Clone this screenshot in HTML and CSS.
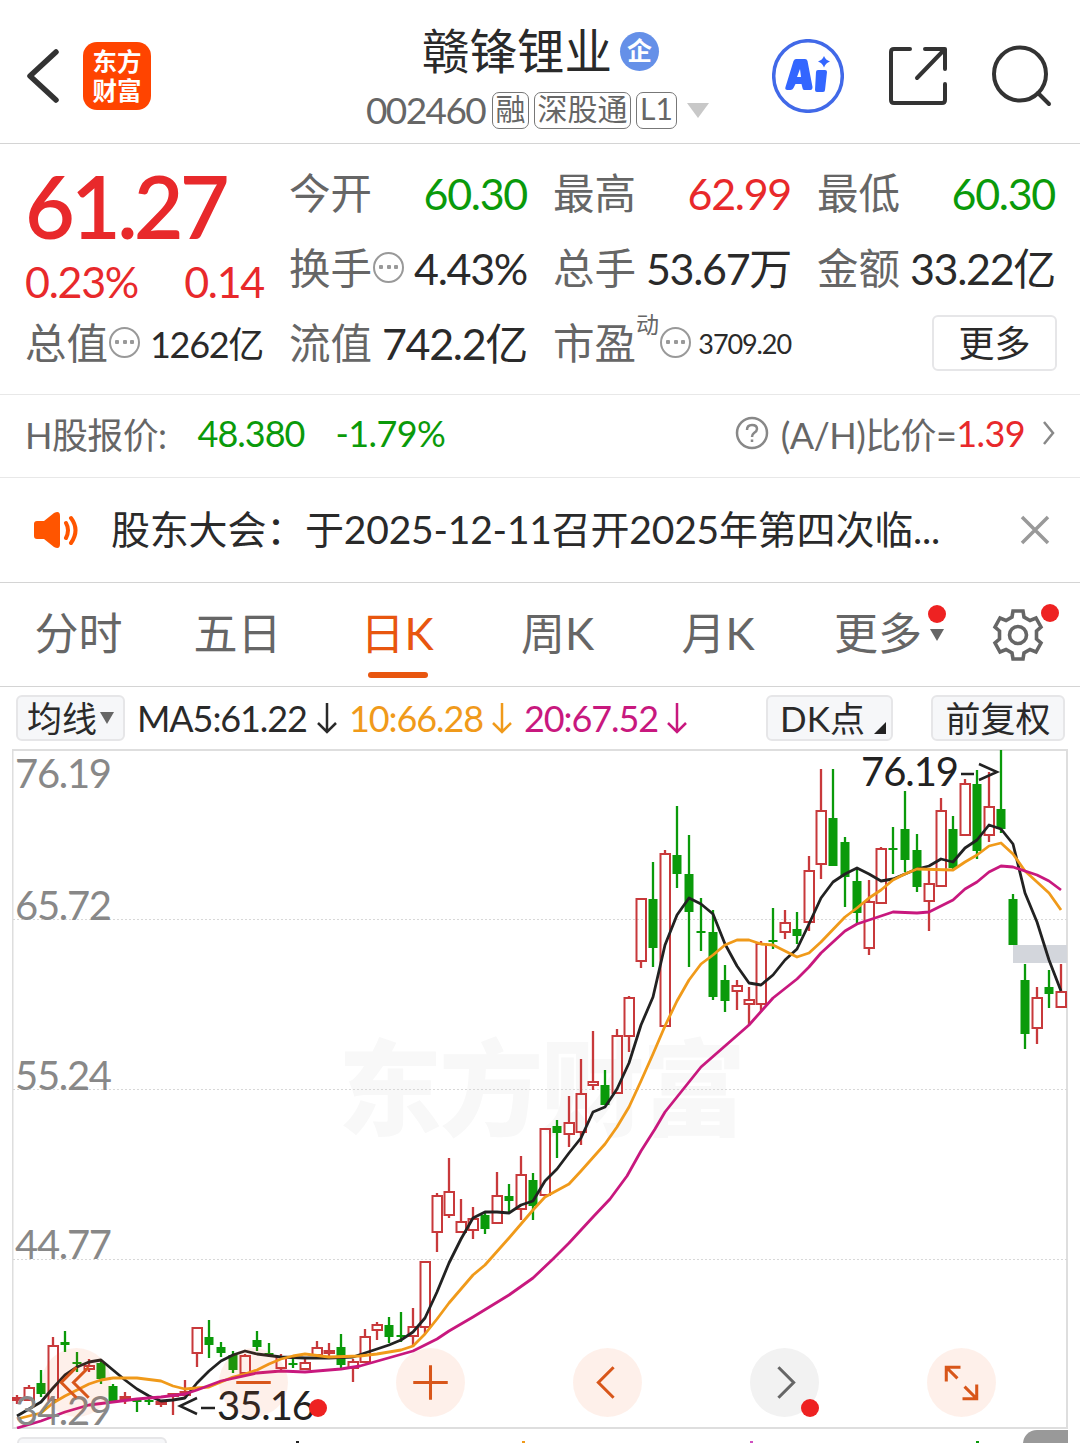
FILE: index.html
```html
<!DOCTYPE html>
<html lang="zh-CN">
<head>
    <meta charset="UTF-8">
    <meta name="viewport" content="width=device-width, initial-scale=1.0">
    <title>赣锋锂业 002460</title>
    <link rel="stylesheet" href="styles.css">
</head>
<body>

<header class="header">
    <div class="header-left">
        <svg class="back" width="36" height="58" viewBox="0 0 36 58"><path d="M29 5L3 29L29 53" fill="none" stroke="#333" stroke-width="5.500" stroke-linecap="round" stroke-linejoin="round"/></svg>
        <div class="logo"><span>东方</span><span>财富</span></div>
    </div>
    <div class="header-title">
        <div class="name"><h1>赣锋锂业</h1><span class="badge">企</span></div>
        <div class="code">
            <span class="code-number">002460</span>
            <span class="tag tag-one">融</span>
            <span class="tag tag-three">深股通</span>
            <span class="tag tag-level">L1</span>
            <i class="arrow-down"></i>
        </div>
    </div>
    <div class="header-right">
        <svg width="72" height="74" viewBox="0 0 72 74">
            <ellipse cx="36" cy="37" rx="34.3" ry="35.3" fill="none" stroke="#4169e8" stroke-width="3.5"/>
            <path fill="#3366ff" fill-rule="evenodd" d="M24 20h9q2 0 2.500 2l5 26q0 3-2 3h-6q-2 0-2-2l-1-4h-6l-2 4q-1 2-3 2h-3q-3 0-2-3l8-26q1-2 2.500-2zM28 30l-3 8h4zM46 31h7q2 0 2 2l-2 18q0 2-2 2h-6q-2 0-2-2l1-18q0-2 2-2zM52 17q1.500 4 6 5.500q-4.500 1.500-6 6q-1.500-4.500-6-6q4.500-1.500 6-5.500z"/>
        </svg>
        <svg width="60" height="60" viewBox="0 0 60 60" fill="none" stroke="#333" stroke-width="4" stroke-linecap="round" stroke-linejoin="round"><path d="M22 3H6Q3 3 3 6V54Q3 57 6 57H54Q57 57 57 54V38M37 3H57V23M56 4L29 32"/></svg>
        <svg width="60" height="62" viewBox="0 0 60 62" fill="none" stroke="#333" stroke-width="4" stroke-linecap="round"><ellipse cx="28" cy="29" rx="26" ry="26.500"/><path d="M46 48L57 59"/></svg>
    </div>
</header>

<section class="quote">
    <div class="price red">
        <div class="price-now">61.27</div>
        <div class="price-change"><span>0.23%</span><span>0.14</span></div>
    </div>
    <div class="cell"><label>今开</label><b class="green">60.30</b></div>
    <div class="cell"><label>最高</label><b class="red">62.99</b></div>
    <div class="cell"><label>最低</label><b class="green">60.30</b></div>
    <div class="cell"><label>换手</label><i class="dots"></i><b>4.43%</b></div>
    <div class="cell"><label>总手</label><b>53.67万</b></div>
    <div class="cell"><label>金额</label><b>33.22亿</b></div>
    <div class="cell"><label>总值</label><i class="dots"></i><b class="medium">1262亿</b></div>
    <div class="cell"><label>流值</label><b>742.2亿</b></div>
    <div class="cell"><label>市盈</label><sup>动</sup><i class="dots"></i><b class="small">3709.20</b></div>
    <div class="cell"><button class="more">更多</button></div>
</section>

<section class="h-share">
    <span>H股报价:</span>
    <span class="green h-price">48.380</span>
    <span class="green h-change">-1.79%</span>
    <div class="ratio">
        <svg width="34" height="34" viewBox="0 0 34 34" fill="none" stroke="#888" stroke-width="2.500"><circle cx="17" cy="17" r="15"/><path d="M12 14Q12 9 17 9Q22 9 22 13Q22 15 19 17Q17 18.500 17 21M17 23.500V26"/></svg>
        <span class="ratio-label">(A/H)比价=</span><span class="red">1.39</span>
        <svg width="14" height="24" viewBox="0 0 14 24" fill="none" stroke="#888" stroke-width="2.500"><path d="M2 1L11 12L2 23"/></svg>
    </div>
</section>

<section class="notice">
    <svg width="46" height="38" viewBox="0 0 46 38">
        <path fill="#ff5500" d="M4 10H11L21 2Q27 -1 27 5V33Q27 39 21 36L11 28H4Q1 28 1 25V13Q1 10 4 10z"/>
        <path fill="none" stroke="#ff5500" stroke-width="4" stroke-linecap="round" d="M33 12Q37 19 33 27M38 7Q47 19 38 32"/>
    </svg>
    <p>股东大会：于2025-12-11召开2025年第四次临...</p>
    <svg width="32" height="32" viewBox="0 0 32 32" fill="none" stroke="#999" stroke-width="3.500"><path d="M3 3L29 29M29 3L3 29"/></svg>
</section>

<nav class="tabs">
    <a>分时</a>
    <a>五日</a>
    <a class="active">日K</a>
    <a>周K</a>
    <a>月K</a>
    <a class="tab-more">更多<i class="caret"></i><i class="dot"></i></a>
    <span class="settings">
        <svg width="52" height="52" viewBox="-26 -26 52 52" fill="none" stroke="#666" stroke-width="3.600"><path d="M-5 -24H5L6 -18L12 -14.500L18 -17L23 -8L18.500 -4V4L23 8L18 17L12 14.500L6 18L5 24H-5L-6 18L-12 14.500L-18 17L-23 8L-18.500 4V-4L-23 -8L-18 -17L-12 -14.500L-6 -18Z"/><circle r="8.500"/></svg>
        <i class="dot"></i>
    </span>
</nav>

<section class="indicator">
    <button class="ma-button">均线<i class="caret"></i></button>
    <span class="ma ma5">MA5:61.22</span><svg class="down" viewBox="0 0 20 32"><path d="M10 1V30M1 21L10 30L19 21"/></svg>
    <span class="ma ma10">10:66.28</span><svg class="down ma10" viewBox="0 0 20 32"><path d="M10 1V30M1 21L10 30L19 21"/></svg>
    <span class="ma ma20">20:67.52</span><svg class="down ma20" viewBox="0 0 20 32"><path d="M10 1V30M1 21L10 30L19 21"/></svg>
    <button class="dk">DK点<i class="corner"></i></button>
    <button class="adjust">前复权</button>
</section>

<section class="chart">
    <svg id="kline" width="1056" height="680" viewBox="12 749 1056 680"></svg>
    <div class="controls">
        <button><svg viewBox="-34 -34 68 68"><path d="M0 -15L-15 0L0 15M12 -15L-3 0L12 15"/></svg></button>
        <button><svg viewBox="-34 -34 68 68"><path d="M-17 0H17"/></svg><i class="dot"></i></button>
        <button><svg viewBox="-34 -34 68 68"><path d="M-17 0H17M0 -17V17"/></svg></button>
        <button><svg viewBox="-34 -34 68 68"><path d="M6 -15L-9 0L6 15"/></svg></button>
        <button class="disabled"><svg viewBox="-34 -34 68 68"><path d="M-6 -15L9 0L-6 15"/></svg><i class="dot"></i></button>
        <button><svg viewBox="-34 -34 68 68"><path d="M-15 -1V-15H-1M-15 -15L-4 -4M15 2V16H1M15 16L3 4"/></svg></button>
    </div>
</section>

<section class="volume">
    <button class="volume-button">成交量</button>
    <i class="tick tick-black"></i>
    <i class="tick tick-orange"></i>
    <i class="tick tick-pink"></i>
    <i class="tick tick-green"></i>
    <span class="volume-side"></span>
</section>

<script src="chart.js"></script>
</body>
</html>
```

FILE: styles.css
```css
* {
    box-sizing: border-box;
}
body {
    font-family: Lato, "Noto Sans CJK SC", sans-serif;
    font-weight: 400;
    margin: 0;
    height: 1443px;
    overflow: hidden;
    background-color: #fff;
    color: #2a2a2a;
    white-space: nowrap;
}
button {
    font: inherit;
    color: inherit;
    padding: 0;
    border: 2px solid #e6e6e8;
    border-radius: 6px;
    background-color: #f6f7f9;
}
svg {
    display: block;
    flex-shrink: 0;
}
.red {
    color: #e8292b;
}
.green {
    color: #0a9a0a;
}
.dot {
    position: absolute;
    width: 18px;
    height: 18px;
    border-radius: 50%;
    background-color: #ee2222;
}
.caret {
    width: 0;
    height: 0;
    border: 7px solid transparent;
    border-top: 12px solid #666;
    border-bottom: 0;
}

/* header */
.header {
    display: grid;
    grid-template-columns: 366px 1fr 308px;
    height: 144px;
    border-bottom: 1px solid #d4d4d4;
}
.header-left {
    display: flex;
    align-items: center;
    gap: 20px;
    padding: 9px 0 0 27px;
}
.logo {
    display: flex;
    flex-direction: column;
    justify-content: center;
    align-items: center;
    width: 68px;
    height: 68px;
    border-radius: 14px;
    background-color: #ff4400;
    color: #fff;
    font-weight: 700;
    font-size: 24.500px;
    line-height: 29px;
}
.name {
    display: flex;
    align-items: center;
    gap: 8px;
    height: 60px;
    margin: 21px 0 0 56px;
}
.name h1 {
    margin: 0;
    font-size: 47.500px;
    font-weight: 400;
    line-height: 60px;
}
.badge {
    width: 39px;
    height: 39px;
    border-radius: 50%;
    background-color: #6590e8;
    color: #fff;
    font-size: 25px;
    font-weight: 700;
    line-height: 37px;
    text-align: center;
}
.code {
    display: flex;
    align-items: center;
    gap: 5px;
    height: 38px;
    margin-top: 10px;
    color: #666;
}
.code-number {
    width: 121px;
    font-size: 37px;
    line-height: 36px;
    letter-spacing: -1.600px;
}
.tag {
    height: 37px;
    border: 1.500px solid #777;
    border-radius: 7px;
    font-size: 30px;
    line-height: 31px;
    text-align: center;
}
.tag-one {
    width: 37px;
}
.tag-three {
    width: 97px;
}
.tag-level {
    width: 41px;
}
.arrow-down {
    margin-left: 5px;
    border: 11px solid transparent;
    border-top: 15px solid #c8c8c8;
    border-bottom: 0;
}
.header-right {
    display: flex;
    align-items: center;
    gap: 44px;
    padding-top: 9px;
}

/* quote table */
.quote {
    display: grid;
    grid-template-columns: repeat(4, 239px);
    grid-template-rows: repeat(3, 75px);
    column-gap: 25px;
    height: 251px;
    padding: 13px 24px 12px 25px;
    border-bottom: 1px solid #e8e8e8;
}
.price {
    grid-row: span 2;
}
.price-now {
    height: 98px;
    font-size: 86px;
    font-weight: 600;
    line-height: 98px;
    letter-spacing: -3.800px;
}
.price-change {
    display: flex;
    justify-content: space-between;
    font-size: 43px;
    line-height: 54px;
    letter-spacing: -1.300px;
}
.cell {
    display: flex;
    align-items: center;
    font-size: 43px;
    line-height: 60px;
}
.cell label {
    margin-top: -4px;
    color: #666;
    font-size: 41.500px;
}
.cell b {
    margin: -2px 1px 0 auto;
    font-weight: inherit;
    letter-spacing: -1.300px;
}
.cell .medium {
    font-size: 36px;
}
.cell .small {
    font-size: 27px;
    letter-spacing: -1.100px;
}
.cell sup {
    align-self: flex-start;
    color: #666;
    font-size: 23px;
    line-height: 34px;
}
.dots {
    width: 31px;
    height: 31px;
    margin: -5px 0 0 1px;
    border: 2.500px solid #999;
    border-radius: 50%;
    background: radial-gradient(circle, #999 2px, transparent 2.500px) center / 8px 8px no-repeat,
        radial-gradient(circle, #999 2px, transparent 2.500px) 2px center / 8px 8px no-repeat,
        radial-gradient(circle, #999 2px, transparent 2.500px) 17px center / 8px 8px no-repeat;
}
.more {
    width: 125px;
    height: 56px;
    margin: -3px -1px 0 auto;
    background-color: #fff;
    font-size: 36px;
    line-height: 47px;
}

/* H share */
.h-share {
    display: flex;
    align-items: center;
    height: 83px;
    padding: 0 24px 6px 25px;
    border-bottom: 1px solid #e8e8e8;
    color: #666;
    font-size: 36px;
    letter-spacing: -0.600px;
}
.h-price {
    width: 110px;
    margin-left: 31px;
    letter-spacing: -1px;
}
.h-change {
    margin-left: 28px;
}
.ratio {
    display: flex;
    align-items: center;
    margin-left: auto;
}
.ratio-label {
    margin-left: 12px;
}
.ratio svg:last-child {
    margin-left: 17px;
}

/* announcement */
.notice {
    display: flex;
    align-items: center;
    height: 105px;
    padding: 0 29px 0 33px;
    border-bottom: 1px solid #d4d4d4;
    font-size: 39px;
}
.notice p {
    flex: 1;
    margin: -6px 0 0 32px;
    letter-spacing: -0.200px;
}

/* period tabs */
.tabs {
    display: grid;
    grid-template-columns: 159px 159px 160px 161px 160px 160px 1fr;
    align-items: center;
    height: 104px;
    border-bottom: 1px solid #d4d4d4;
    color: #666;
    font-size: 44px;
}
.tabs a {
    position: relative;
    height: 104px;
    line-height: 100px;
    text-align: center;
    left: -1px;
}
.tabs .active {
    color: #e8560f;
}
.tabs .active::after {
    content: "";
    position: absolute;
    left: 51px;
    bottom: 9px;
    width: 60px;
    height: 6px;
    border-radius: 3px;
    background-color: #e8560f;
}
.tabs .caret {
    position: absolute;
    left: 132px;
    top: 46px;
}
.tab-more .dot {
    left: 130px;
    top: 22px;
}
.settings {
    position: relative;
    padding-left: 33px;
}
.settings .dot {
    left: 82px;
    top: -5px;
}

/* MA line */
.indicator {
    display: flex;
    align-items: center;
    height: 62px;
    padding: 0 15px 0 16px;
    font-size: 35px;
}
.indicator button {
    display: flex;
    align-items: center;
    justify-content: center;
    position: relative;
    height: 46px;
    line-height: 39px;
}
.ma-button {
    width: 109px;
    margin-right: 12px;
}
.ma-button .caret {
    margin-left: 3px;
}
.ma {
    width: 143px;
    font-size: 36px;
    letter-spacing: -1.100px;
}
.ma5 {
    width: 180px;
}
.ma10 {
    color: #f09a1a;
}
.ma20 {
    color: #c8187e;
}
.down {
    width: 20px;
    height: 32px;
    margin-right: 12px;
    fill: none;
    stroke: currentColor;
    stroke-width: 2.500;
}
.indicator .dk {
    width: 127px;
    margin-left: auto;
    padding-right: 14px;
}
.corner {
    position: absolute;
    right: 5px;
    bottom: 5px;
    border-left: 12px solid transparent;
    border-bottom: 12px solid #222;
}
.adjust {
    width: 134px;
    margin-left: 38px;
}

/* chart */
.chart {
    position: relative;
    height: 680px;
    padding-left: 12px;
}
.controls {
    position: absolute;
    left: 42px;
    bottom: 12px;
    display: flex;
    gap: 108px;
}
.controls button {
    position: relative;
    width: 69px;
    height: 69px;
    border: 0;
    border-radius: 50%;
    background-color: rgba(240, 90, 20, 0.09);
}
.controls svg {
    width: 69px;
    height: 69px;
    fill: none;
    stroke: #d8561a;
    stroke-width: 3;
}
.controls .disabled {
    background-color: #f2f2f2;
}
.controls .disabled svg {
    stroke: #666;
}
.controls .dot {
    right: 0;
    bottom: 0;
}
.controls button:nth-child(2) .dot {
    right: -39px;
}
#kline text {
    font-size: 40px;
}

/* volume strip */
.volume {
    display: grid;
    grid-template-columns: 150px 132px 226px 228px 226px 1fr;
    height: 14px;
    padding: 0 12px 0 17px;
    overflow: hidden;
}
.volume-button {
    height: 46px;
    margin-top: 8px;
    font-size: 35px;
    line-height: 34px;
}
.tick {
    justify-self: end;
    width: 3px;
    height: 2px;
    margin-top: 12px;
}
.tick-black {
    background-color: #222;
}
.tick-orange {
    background-color: #f09a1a;
}
.tick-pink {
    background-color: #d050c0;
}
.tick-green {
    background-color: #0a9a0a;
}
.volume-side {
    justify-self: end;
    width: 45px;
    height: 40px;
    margin-top: 1px;
    border-radius: 14px 0 0 0;
    background-color: #999;
}
```

FILE: chart.js
```js
// [up, high, body top, body bottom, low] for each day
var candles = [
    [1, 1395, 1398, 1400, 1404], [1, 1385, 1388, 1400, 1400], [0, 1370, 1383, 1394, 1397], [1, 1337, 1346, 1400, 1400],
    [0, 1331, 1342, 1345, 1352], [0, 1352, 1362, 1364, 1372], [1, 1359, 1366, 1369, 1372], [0, 1360, 1363, 1379, 1384],
    [0, 1384, 1386, 1402, 1402], [1, 1392, 1397, 1399, 1404], [0, 1400, 1400, 1402, 1412], [0, 1397, 1400, 1402, 1405],
    [1, 1401, 1402, 1404, 1407], [1, 1393, 1394, 1396, 1415], [1, 1380, 1392, 1395, 1397], [1, 1328, 1328, 1353, 1367],
    [0, 1320, 1337, 1345, 1358], [0, 1342, 1347, 1353, 1357], [0, 1351, 1355, 1370, 1373], [1, 1354, 1356, 1373, 1373],
    [0, 1331, 1340, 1347, 1351], [0, 1343, 1353, 1355, 1357], [1, 1354, 1357, 1368, 1370], [0, 1357, 1363, 1365, 1368],
    [1, 1359, 1363, 1369, 1369], [1, 1341, 1348, 1355, 1357], [1, 1343, 1351, 1353, 1358], [0, 1334, 1347, 1365, 1368],
    [1, 1359, 1362, 1368, 1382], [1, 1329, 1337, 1362, 1363], [1, 1322, 1325, 1330, 1340], [0, 1317, 1325, 1337, 1343],
    [0, 1312, 1335, 1337, 1342], [1, 1308, 1327, 1336, 1347], [1, 1261, 1262, 1327, 1334], [1, 1193, 1196, 1232, 1252],
    [1, 1158, 1192, 1215, 1218], [1, 1199, 1222, 1232, 1232], [1, 1207, 1219, 1230, 1239], [0, 1213, 1215, 1229, 1234],
    [1, 1172, 1196, 1223, 1223], [0, 1184, 1196, 1201, 1212], [1, 1156, 1175, 1209, 1220], [0, 1173, 1180, 1206, 1220],
    [1, 1128, 1129, 1195, 1195], [0, 1120, 1126, 1133, 1158], [1, 1096, 1123, 1134, 1147], [1, 1059, 1094, 1132, 1145],
    [1, 1031, 1082, 1085, 1090], [0, 1070, 1085, 1105, 1105], [1, 1029, 1036, 1093, 1093], [1, 996, 998, 1036, 1052],
    [1, 899, 899, 961, 968], [0, 862, 899, 948, 967], [1, 850, 854, 1026, 1026], [0, 806, 855, 874, 888],
    [0, 835, 874, 912, 967], [0, 898, 931, 933, 951], [0, 910, 932, 997, 1000], [0, 965, 980, 1001, 1012],
    [1, 980, 986, 991, 1010], [1, 987, 1000, 1004, 1025], [1, 941, 944, 1004, 1012], [0, 908, 940, 942, 949],
    [1, 910, 923, 932, 939], [0, 912, 929, 936, 944], [1, 856, 871, 922, 931], [1, 769, 811, 864, 879],
    [0, 769, 818, 866, 866], [0, 837, 842, 877, 907], [0, 870, 881, 913, 924], [1, 880, 902, 948, 955],
    [1, 847, 849, 903, 903], [0, 827, 848, 850, 874], [0, 791, 829, 860, 872], [0, 834, 850, 887, 892],
    [1, 868, 884, 901, 931], [1, 798, 811, 886, 886], [0, 816, 829, 868, 870], [1, 779, 784, 835, 835],
    [0, 770, 784, 851, 859], [1, 772, 807, 835, 842], [0, 750, 809, 829, 833], [0, 894, 899, 945, 945],
    [0, 964, 980, 1034, 1049], [1, 987, 998, 1028, 1044], [0, 970, 987, 994, 1008], [1, 964, 992, 1007, 1007]
];

var ma5 = "17,1416 41,1402 53,1388 65,1375 77,1367 89,1362 101,1360 113,1370 125,1380 137,1389 149,1396 161,1401 173,1400 185,1398 197,1383 209,1371 221,1361 233,1355 245,1351 257,1354 281,1357 305,1358 329,1358 353,1357 365,1353 377,1349 389,1345 401,1340 413,1332 425,1318 437,1292 449,1263 461,1239 473,1218 485,1212 497,1212 509,1213 521,1205 533,1201 545,1181 557,1169 569,1153 581,1138 593,1112 605,1107 617,1089 629,1063 641,1025 653,997 665,945 677,915 689,898 701,904 713,914 725,944 737,966 749,983 761,985 773,975 785,960 797,949 809,924 821,898 833,882 845,874 857,868 869,874 881,881 893,879 905,874 917,869 929,866 941,859 953,862 965,848 977,840 989,825 1001,829 1013,844 1025,893 1037,922 1049,960 1061,991";
var ma10 = "17,1419 41,1413 53,1403 65,1396 77,1390 89,1384 101,1380 113,1378 137,1378 161,1381 173,1386 185,1389 209,1387 233,1377 245,1374 257,1370 269,1364 281,1359 293,1356 305,1354 329,1357 360,1356 377,1354 401,1350 413,1346 425,1334 437,1319 449,1303 473,1275 485,1265 509,1238 533,1210 545,1197 569,1184 581,1171 605,1144 617,1127 629,1107 641,1081 653,1054 665,1026 677,1001 689,980 701,964 713,955 725,945 737,940 749,940 761,944 773,945 785,951 797,957 809,953 821,942 845,917 857,908 869,898 881,890 893,880 905,874 917,869 953,870 965,862 977,855 989,846 1001,843 1013,854 1025,871 1037,882 1049,893 1061,910";
var ma20 = "17,1428 41,1421 65,1412 89,1405 113,1402 137,1399 161,1397 185,1394 197,1390 221,1381 257,1373 281,1371 305,1372 341,1369 360,1366 413,1351 437,1339 449,1331 473,1317 509,1295 533,1278 553,1259 569,1243 593,1217 610,1199 627,1176 641,1151 655,1129 665,1112 701,1067 749,1025 773,998 797,979 809,967 821,953 845,931 857,924 869,920 893,912 917,913 929,912 953,900 965,889 977,882 989,872 1001,866 1013,867 1037,875 1049,881 1061,890";

var out = "";

out += '<text x="338" y="1128" textLength="408" font-weight="900" style="font-size:104px" fill="#f8f8f8">东方财富</text>';

// frame and grid
out += '<path d="M12.500 750V1428.500M1067 750V1428M12 750H1068M12 1428H1068" stroke="#dedede" stroke-width="2" fill="none"/>';
[919, 1089, 1259].forEach(function (y) {
    out += '<path d="M13 ' + y + '.500H1067" stroke="#d8d8d8" stroke-dasharray="2 2"/>';
});
out += '<rect x="1013" y="945" width="54" height="18" fill="#d3d6dc"/>';

candles.forEach(function (c, i) {
    var x = 17 + i * 12;
    var color = c[0] ? "#c8393b" : "#0a9a0a";
    out += '<path d="M' + x + ' ' + c[1] + 'V' + c[2] + 'M' + x + ' ' + c[3] + 'V' + c[4] + '" stroke="' + color + '" stroke-width="2.300"/>';
    if (c[0]) {
        out += '<rect x="' + (x - 4.5) + '" y="' + c[2] + '" width="9.500" height="' + (c[3] - c[2]) + '" fill="none" stroke="' + color + '" stroke-width="2"/>';
    } else {
        out += '<rect x="' + (x - 4.5) + '" y="' + c[2] + '" width="9" height="' + (c[3] - c[2]) + '" fill="' + color + '"/>';
    }
});

[[ma5, "#222"], [ma10, "#f09a1a"], [ma20, "#c8187e"]].forEach(function (line) {
    out += '<polyline points="' + line[0] + '" fill="none" stroke="' + line[1] + '" stroke-width="2.800" stroke-linejoin="round"/>';
});

// price labels
[["76.19", 788], ["65.72", 920], ["55.24", 1090], ["44.77", 1259], ["34.29", 1425]].forEach(function (l) {
    out += '<text x="15" y="' + l[1] + '" textLength="97" fill="#888">' + l[0] + '</text>';
});
out += '<text x="861" y="786" textLength="98" fill="#222">76.19</text>';
out += '<path d="M961 774H974M979 764L997 772L979 780" fill="none" stroke="#222" stroke-width="2.500"/>';
out += '<text x="217" y="1420" textLength="98" fill="#222">35.16</text>';
out += '<path d="M197 1398L180 1406L197 1414M201 1408H215" fill="none" stroke="#222" stroke-width="2.500"/>';

document.getElementById("kline").innerHTML = out;
```
